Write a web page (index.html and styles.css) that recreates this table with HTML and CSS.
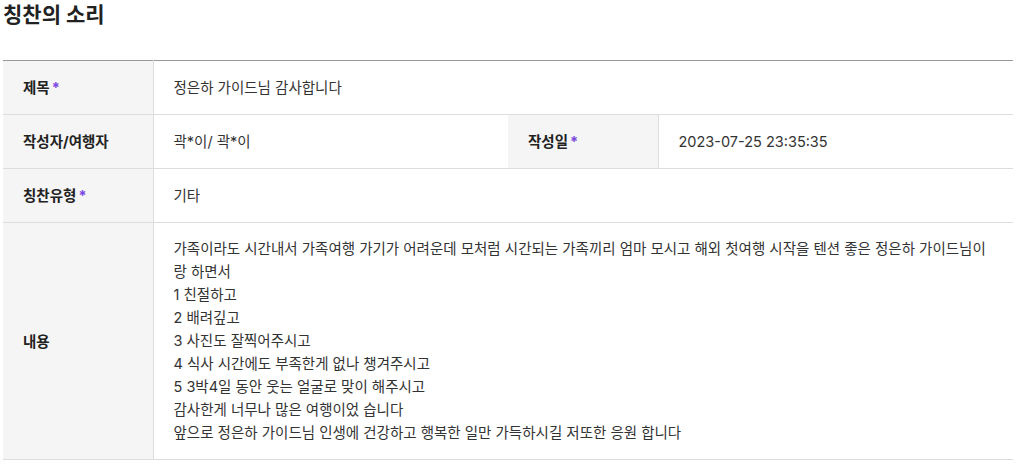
FILE: index.html
```html
<!DOCTYPE html>
<html lang="ko">
<head>
    <meta charset="UTF-8">
    <meta name="viewport" content="width=device-width, initial-scale=1.0">
    <title>칭찬의 소리</title>
    <link rel="stylesheet" href="styles.css">
</head>
<body>
    <div class="board-view">
        <h2 class="board-title">칭찬의 소리</h2>
        <table class="view-table">
            <colgroup>
                <col class="col-label">
                <col class="col-value">
                <col class="col-label">
                <col class="col-value">
            </colgroup>
            <tr>
                <th>제목<span class="req">*</span></th>
                <td colspan="3">정은하 가이드님 감사합니다</td>
            </tr>
            <tr>
                <th>작성자/여행자</th>
                <td>곽*이/ 곽*이</td>
                <th>작성일<span class="req">*</span></th>
                <td>2023-07-25 23:35:35</td>
            </tr>
            <tr>
                <th>칭찬유형<span class="req">*</span></th>
                <td colspan="3">기타</td>
            </tr>
            <tr>
                <th>내용</th>
                <td colspan="3" class="content">가족이라도 시간내서 가족여행 가기가 어려운데 모처럼 시간되는 가족끼리 엄마 모시고 해외 첫여행 시작을 텐션 좋은 정은하 가이드님이랑 하면서<br>
                    1 친절하고<br>
                    2 배려깊고<br>
                    3 사진도 잘찍어주시고<br>
                    4 식사 시간에도 부족한게 없나 챙겨주시고<br>
                    5 3박4일 동안 웃는 얼굴로 맞이 해주시고<br>
                    감사한게 너무나 많은 여행이었 습니다<br>
                    앞으로 정은하 가이드님 인생에 건강하고 행복한 일만 가득하시길 저또한 응원 합니다</td>
            </tr>
        </table>
    </div>
</body>
</html>
```

FILE: styles.css
```css
body {
    margin: 0;
    font-family: Inter, 'Noto Sans CJK KR', sans-serif;
    color: #333333;
    background-color: #ffffff;
}
.board-view {
    width: 1010px;
    margin-left: 3px;
}
.board-title {
    margin: 0 0 30px;
    font-size: 21px;
    line-height: 30px;
    font-weight: 700;
    color: #222222;
}
.view-table {
    width: 100%;
    border-collapse: collapse;
    table-layout: fixed;
    border-top: 1px solid #999999;
    font-size: 14.5px;
    line-height: 23px;
}
.col-label {
    width: 150px;
}
.view-table th,
.view-table td {
    padding: 15px 20px;
    text-align: left;
    vertical-align: middle;
    border-bottom: 1px solid #dddddd;
}
.view-table th {
    background-color: #f5f5f5;
    font-weight: 700;
    color: #222222;
}
.view-table td {
    border-left: 1px solid #dddddd;
    font-weight: 400;
}
.view-table td.content {
    padding: 14px 20px 15px;
}
.req {
    margin-left: 2px;
    color: #7b45e0;
}
```
